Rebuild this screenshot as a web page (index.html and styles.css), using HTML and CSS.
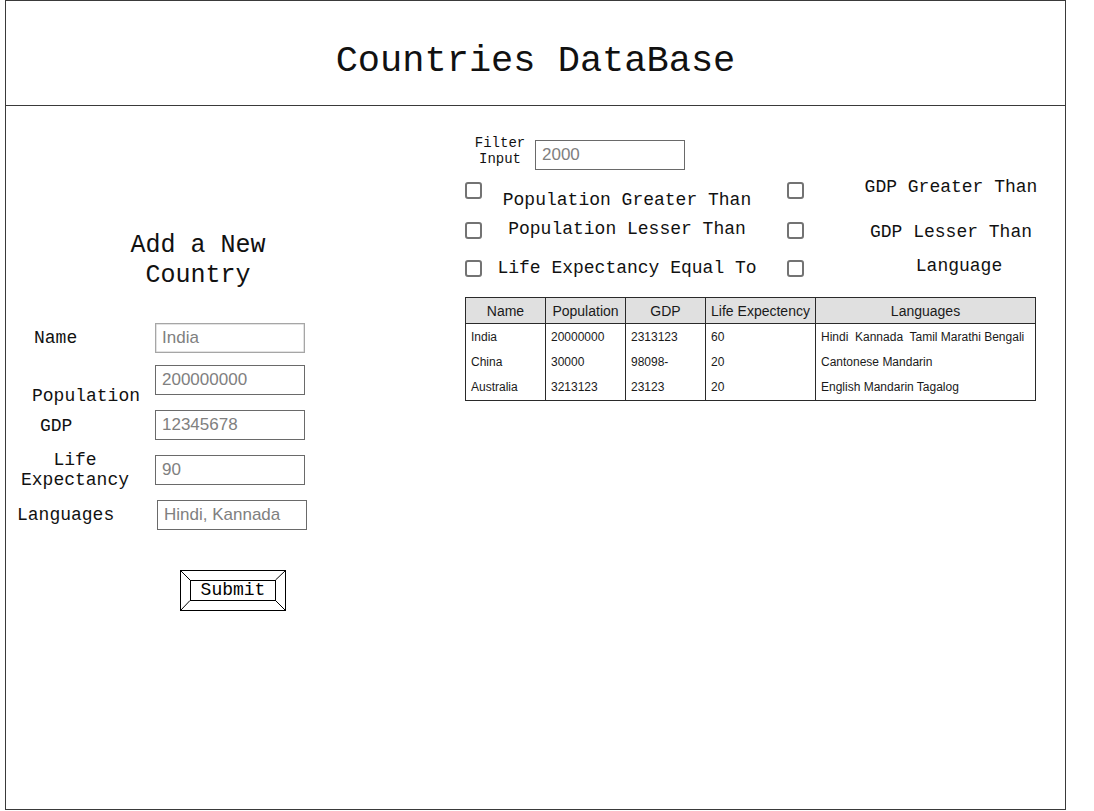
FILE: index.html
```html
<!DOCTYPE html>
<html>
<head>
<meta charset="utf-8">
<title>Countries DataBase</title>
<link rel="stylesheet" href="styles.css">
</head>
<body>
<div class="frame">
  <header class="header">
    <h1 class="title">Countries DataBase</h1>
  </header>
  <main class="main">
    <section class="left">
      <h2 class="add-title">Add a New<br>Country</h2>
      <form class="form">
        <div class="row">
          <label class="lbl lbl-name">Name</label>
          <input class="field field-light" type="text" placeholder="India">
        </div>
        <div class="row row-gap12">
          <label class="lbl lbl-pop">Population</label>
          <input class="field" type="text" placeholder="200000000">
        </div>
        <div class="row">
          <label class="lbl lbl-gdp">GDP</label>
          <input class="field" type="text" placeholder="12345678">
        </div>
        <div class="row">
          <label class="lbl lbl-life"><span class="life-text">Life<br>Expectancy</span></label>
          <input class="field" type="text" placeholder="90">
        </div>
        <div class="row">
          <label class="lbl lbl-lang">Languages</label>
          <input class="field field-shift" type="text" placeholder="Hindi, Kannada">
        </div>
        <div class="submit">
          <svg class="submit-lines" width="106" height="41" viewBox="0 0 106 41">
            <line x1="0.5" y1="0.5" x2="10" y2="10" />
            <line x1="105.5" y1="0.5" x2="95.5" y2="10" />
            <line x1="0.5" y1="40.5" x2="10" y2="30.5" />
            <line x1="105.5" y1="40.5" x2="95.5" y2="30.5" />
          </svg>
          <div class="submit-inner">Submit</div>
        </div>
      </form>
    </section>
    <section class="right">
      <div class="filter-row">
        <div class="filter-label">Filter<br>Input</div>
        <input class="field" type="text" placeholder="2000">
      </div>
      <div class="cb-row cb-row1">
        <span class="cb"></span>
        <span class="opt opt-left off-pgt">Population Greater Than</span>
        <span class="cb cb-right"></span>
        <span class="opt opt-right off-ggt">GDP Greater Than</span>
      </div>
      <div class="cb-row cb-row2">
        <span class="cb"></span>
        <span class="opt opt-left off-plt">Population Lesser Than</span>
        <span class="cb cb-right"></span>
        <span class="opt opt-right off-glt">GDP Lesser Than</span>
      </div>
      <div class="cb-row cb-row3">
        <span class="cb"></span>
        <span class="opt opt-left off-lee">Life Expectancy Equal To</span>
        <span class="cb cb-right"></span>
        <span class="opt opt-right off-lang">Language</span>
      </div>
      <table class="data">
        <colgroup>
          <col class="c1"><col class="c2"><col class="c3"><col class="c4"><col class="c5">
        </colgroup>
        <thead>
          <tr><th>Name</th><th>Population</th><th>GDP</th><th>Life Expectency</th><th>Languages</th></tr>
        </thead>
        <tbody>
          <tr><td>India</td><td>20000000</td><td>2313123</td><td>60</td><td>Hindi&nbsp; Kannada&nbsp; Tamil Marathi Bengali</td></tr>
          <tr><td>China</td><td>30000</td><td>98098-</td><td>20</td><td>Cantonese Mandarin</td></tr>
          <tr><td>Australia</td><td>3213123</td><td>23123</td><td>20</td><td>English Mandarin Tagalog</td></tr>
        </tbody>
      </table>
    </section>
  </main>
</div>
</body>
</html>
```

FILE: styles.css
```css
* { box-sizing: border-box; }

body {
  margin: 0;
  background: #ffffff;
  font-family: "Liberation Mono", "DejaVu Sans Mono", monospace;
  color: #111;
}

.frame {
  margin-left: 5px;
  width: 1061px;
  height: 810px;
  border: 1px solid #3a3a3a;
  display: flex;
  flex-direction: column;
}

.header {
  height: 105px;
  flex: none;
  border-bottom: 1px solid #3a3a3a;
  padding-top: 38px;
  text-align: center;
}

.title {
  margin: 0;
  font-weight: normal;
  font-size: 37px;
  line-height: 44px;
  color: #111;
}

.main {
  display: flex;
  flex: 1;
}

.left {
  width: 459px;
  flex: none;
}

.add-title {
  margin: 125px 0 0 0;
  width: 384px;
  text-align: center;
  font-weight: normal;
  font-size: 25px;
  line-height: 30px;
}

.form {
  margin-top: 32px;
}

.row {
  display: flex;
  align-items: flex-start;
  height: 30px;
  margin-top: 15px;
}

.row:first-child { margin-top: 0; }
.row.row-gap12 { margin-top: 12px; }

.lbl {
  width: 149px;
  flex: none;
  font-size: 18px;
  line-height: 20px;
  white-space: nowrap;
}

.lbl-name { margin-top: 5px; padding-left: 28px; }
.lbl-pop { margin-top: 21px; padding-left: 26px; }
.lbl-gdp { margin-top: 6px; padding-left: 34px; }
.lbl-life { margin-top: -5px; padding-left: 15px; }
.lbl-lang { margin-top: 5px; padding-left: 11px; }

.life-text {
  display: inline-block;
  width: 108px;
  text-align: center;
}

.field {
  width: 150px;
  height: 30px;
  flex: none;
  border: 1px solid #6a6a6a;
  border-radius: 0;
  padding: 0 6px;
  margin: 0;
  font-family: "Liberation Sans", Arial, sans-serif;
  font-size: 17px;
  color: #777;
  background: #fff;
  outline: none;
}

.field::placeholder { color: #808080; }

.field-light { border: 1px solid #a6a6a6; box-shadow: inset 0 0 0 0.5px #c8c8c8; }
.field-shift { margin-left: 2px; }

.submit {
  position: relative;
  margin-top: 40px;
  margin-left: 174px;
  width: 106px;
  height: 41px;
  border: 1px solid #000;
  padding: 9px;
}

.submit-lines {
  position: absolute;
  left: -1px;
  top: -1px;
  stroke: #000;
  stroke-width: 1;
  fill: none;
}

.submit-inner {
  height: 21px;
  border: 1px solid #000;
  text-align: center;
  font-size: 18px;
  line-height: 19px;
  color: #000;
}

.right {
  flex: 1;
  padding-top: 34px;
}

.filter-row {
  display: flex;
  align-items: flex-start;
  height: 30px;
}

.filter-label {
  width: 70px;
  margin-top: -5px;
  text-align: center;
  font-size: 14px;
  line-height: 16px;
}

.cb-row {
  display: flex;
  align-items: flex-start;
  height: 17px;
}

.cb-row1 { margin-top: 12px; }
.cb-row2 { margin-top: 23px; }
.cb-row3 { margin-top: 21px; }

.cb {
  width: 17px;
  height: 17px;
  flex: none;
  border: 2px solid #737373;
  border-radius: 3px;
  background: #fff;
}

.cb-right { margin-left: 30px; }

.opt {
  flex: none;
  font-size: 18px;
  line-height: 20px;
  text-align: center;
  white-space: nowrap;
}

.opt-left { margin-left: 15px; width: 260px; }
.opt-right { margin-left: 32px; width: 230px; }

.off-pgt { margin-top: 8px; }
.off-plt { margin-top: -3px; }
.off-lee { margin-top: -2px; }
.off-ggt { margin-top: -5px; }
.off-glt { margin-top: 0; }
.off-lang { margin-top: -4px; padding-left: 16px; }

.data {
  margin-top: 20px;
  border-collapse: collapse;
  table-layout: fixed;
  width: 570px;
  font-family: "Liberation Sans", Arial, sans-serif;
  color: #1a1a1a;
  border: 1px solid #2a2a2a;
}

.c1, .c2, .c3 { width: 80px; }
.c4 { width: 110px; }
.c5 { width: 220px; }

.data th {
  background: #e0e0e0;
  font-weight: normal;
  font-size: 14px;
  height: 26px;
  padding: 0;
  text-align: center;
  border: 1px solid #2a2a2a;
  white-space: nowrap;
}

.data td {
  font-size: 12px;
  height: 25.5px;
  padding: 0 0 0 5px;
  text-align: left;
  border-left: 1px solid #2a2a2a;
  border-right: 1px solid #2a2a2a;
  white-space: nowrap;
}
```
